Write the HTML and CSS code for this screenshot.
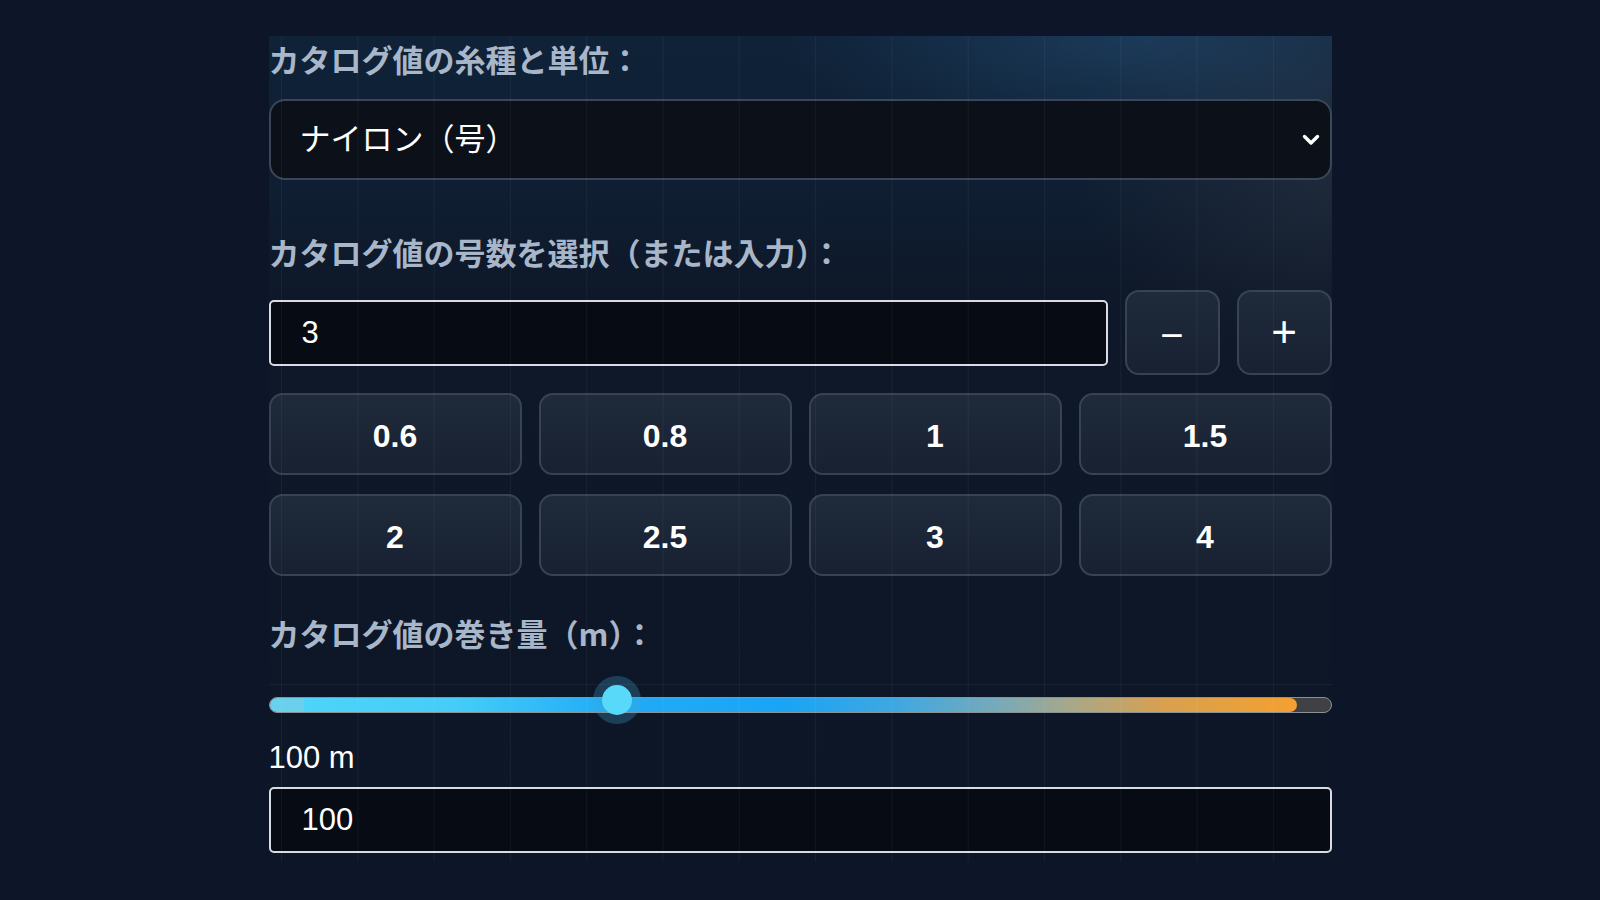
FILE: index.html
```html
<!DOCTYPE html>
<html lang="ja">
<head>
<meta charset="utf-8">
<title>カタログ値</title>
<link rel="stylesheet" href="styles.css">
</head>
<body>
<main class="panel">
  <label class="label label-first">カタログ値の糸種と単位：</label>
  <div class="select">
    <span class="select-text">ナイロン（号）</span>
    <svg class="chevron" width="18" height="12" viewBox="0 0 18 12"><path d="M2.5 2.5 L9 9 L15.5 2.5" fill="none" stroke="#fff" stroke-width="3.4" stroke-linecap="round" stroke-linejoin="round"/></svg>
  </div>

  <label class="label label-second">カタログ値の号数を選択（または入力）：</label>
  <div class="num-row">
    <div class="num-input">3</div>
    <button class="step">−</button>
    <button class="step step-plus">+</button>
  </div>
  <div class="presets">
    <button class="preset">0.6</button>
    <button class="preset">0.8</button>
    <button class="preset">1</button>
    <button class="preset">1.5</button>
    <button class="preset">2</button>
    <button class="preset">2.5</button>
    <button class="preset">3</button>
    <button class="preset">4</button>
  </div>

  <label class="label label-third">カタログ値の巻き量（m）：</label>
  <div class="slider">
    <div class="track">
      <div class="fill"></div>
    </div>
    <div class="thumb" style="left: 32.8%"></div>
  </div>
  <div class="value">100 m</div>
  <div class="num-input wide">100</div>
</main>
</body>
</html>
```

FILE: styles.css
```css
* { box-sizing: border-box; }
html, body { margin: 0; padding: 0; }
body {
  background: #0c1628;
  font-family: "Liberation Sans", "Noto Sans CJK JP", sans-serif;
  color: #fff;
  width: 1600px;
  height: 900px;
  overflow: hidden;
}
.panel {
  position: relative;
  width: 1063px;
  margin: 36px auto 0;
  padding: 5px 0 9px;
  display: flex;
  flex-direction: column;
  background:
    radial-gradient(ellipse 360px 120px at 82% 0%, rgba(45, 95, 140, 0.4), transparent 100%),
    radial-gradient(ellipse 260px 200px at 100% 15%, rgba(70, 70, 80, 0.3), transparent 100%),
    linear-gradient(180deg, #0f2238 0px, #0f1f33 140px, #0e1829 260px, #0d1627 100%);
}
.panel::after {
  content: "";
  position: absolute;
  inset: 0;
  pointer-events: none;
  background-image: linear-gradient(90deg, rgba(255,255,255,0.045) 0, rgba(255,255,255,0.045) 1px, transparent 1px);
  background-size: 76.3px 100%;
  background-position: 12px 0;
}
.label {
  display: block;
  font-family: "Noto Sans CJK JP", sans-serif;
  font-weight: 700;
  font-size: 31px;
  line-height: 36px;
  color: #a8b6c9;
}
.label-first { margin: 0; }
.label-second { margin-top: 54px; }
.label-third { margin-top: 39px; }

.select {
  margin-top: 22px;
  height: 81px;
  border: 2px solid #3b4759;
  border-radius: 16px;
  background: #0b1019;
  display: flex;
  align-items: center;
  justify-content: space-between;
  padding: 0 10px 0 29px;
}
.select-text {
  font-family: "Noto Sans CJK JP", sans-serif;
  font-size: 31px;
  line-height: 36px;
  color: #fff;
  margin-top: -5px;
}
.chevron { display: block; margin-top: 0; }

.num-row {
  margin-top: 20px;
  height: 85px;
  display: flex;
  align-items: center;
  gap: 17px;
}
.num-input {
  height: 66px;
  border: 2px solid #d9dde3;
  border-radius: 5px;
  background: #070b14;
  font-size: 31px;
  color: #fff;
  display: flex;
  align-items: center;
  padding-left: 31px;
}
.num-row .num-input { flex: 1; }
.step {
  width: 95px;
  height: 85px;
  flex: none;
  border: 2px solid #364356;
  border-radius: 14px;
  background: linear-gradient(180deg, #1f2a3a, #172131);
  color: #fff;
  font-family: "Liberation Sans", sans-serif;
  font-size: 40px;
  font-weight: 400;
  line-height: 1;
  padding: 4px 0 0;
}
.step-plus { font-size: 44px; padding: 0 0 2px; }

.presets {
  margin-top: 18px;
  display: grid;
  grid-template-columns: repeat(4, 1fr);
  column-gap: 17px;
  row-gap: 19px;
}
.preset {
  height: 82px;
  border: 2px solid #364356;
  border-radius: 14px;
  background: linear-gradient(180deg, #1f2a3a, #172131);
  color: #fff;
  font-family: "Liberation Sans", sans-serif;
  font-weight: 700;
  font-size: 32px;
  padding: 5px 0 0;
}

.slider {
  position: relative;
  margin-top: 33px;
  height: 56px;
  border-top: 1px solid rgba(255,255,255,0.05);
  display: flex;
  align-items: flex-start;
  padding-top: 12px;
}
.track {
  width: 100%;
  height: 16px;
  border-radius: 8px;
  background: #404144;
  border: 1.5px solid #8b9099;
  overflow: hidden;
  position: relative;
}
.fill {
  height: 100%;
  width: 96.8%;
  border-radius: 0 8px 8px 0;
  background: linear-gradient(90deg,
    #6ad0ec 0%, #6ad0ec 3.2%,
    #4dd4fa 3.4%, #45cdf8 18%,
    #22acf6 33%, #1aa4f5 50%,
    #3fa8e0 61%, #78aab8 71%,
    #a8a888 78%, #d8a050 87%, #f5a030 100%);
}
.thumb {
  position: absolute;
  top: 0;
  width: 30px;
  height: 30px;
  margin-left: -15px;
  border-radius: 50%;
  background: #58d9fa;
  box-shadow: 0 0 0 9px rgba(70, 170, 210, 0.28);
}
.value {
  font-size: 31px;
  line-height: 36px;
  color: #fff;
}
.wide {
  margin-top: 11px;
}
```
